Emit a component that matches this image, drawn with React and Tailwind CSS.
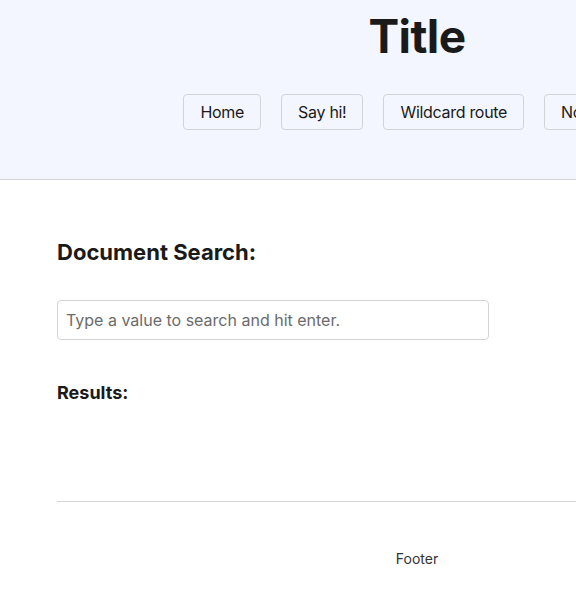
import React from 'react';

const links = ['Home', 'Say hi!', 'Wildcard route', 'Not found'];

const App = () => {
  return (
    <div className="w-[834px] min-h-[591px] bg-white text-[#1a1a1a] font-['Inter',sans-serif]">
      <header className="h-[180px] bg-[#f3f6fe] border-b border-[#d4d4d8] pt-[8px]">
        <h1 className="text-center text-[46px] leading-[56px] font-bold tracking-[-0.6px]">Title</h1>
        <nav className="mt-[30px] flex justify-center gap-5">
          {links.map((l) => (
            <button
              key={l}
              className="h-9 px-4 text-base tracking-[-0.3px] border border-[#d4d4d8] rounded bg-[#f3f6fe] text-[#1a1a1a]"
            >
              {l}
            </button>
          ))}
        </nav>
      </header>

      <main className="px-[57px] pt-[57px]">
        <h2 className="text-[22px] leading-[30px] font-bold">Document Search:</h2>
        <input
          type="text"
          placeholder="Type a value to search and hit enter."
          className="mt-[33px] block w-[432px] h-10 px-2 text-base border border-[#d4d4d8] rounded placeholder:text-[#6b6b6b] outline-none"
        />
        <h3 className="mt-[39px] text-lg font-bold">Results:</h3>
        <hr className="mt-[94px] border-[#d4d4d8]" />
      </main>

      <footer className="pt-[47px] text-center text-sm text-[#333]">Footer</footer>
    </div>
  );
};

export default App;
